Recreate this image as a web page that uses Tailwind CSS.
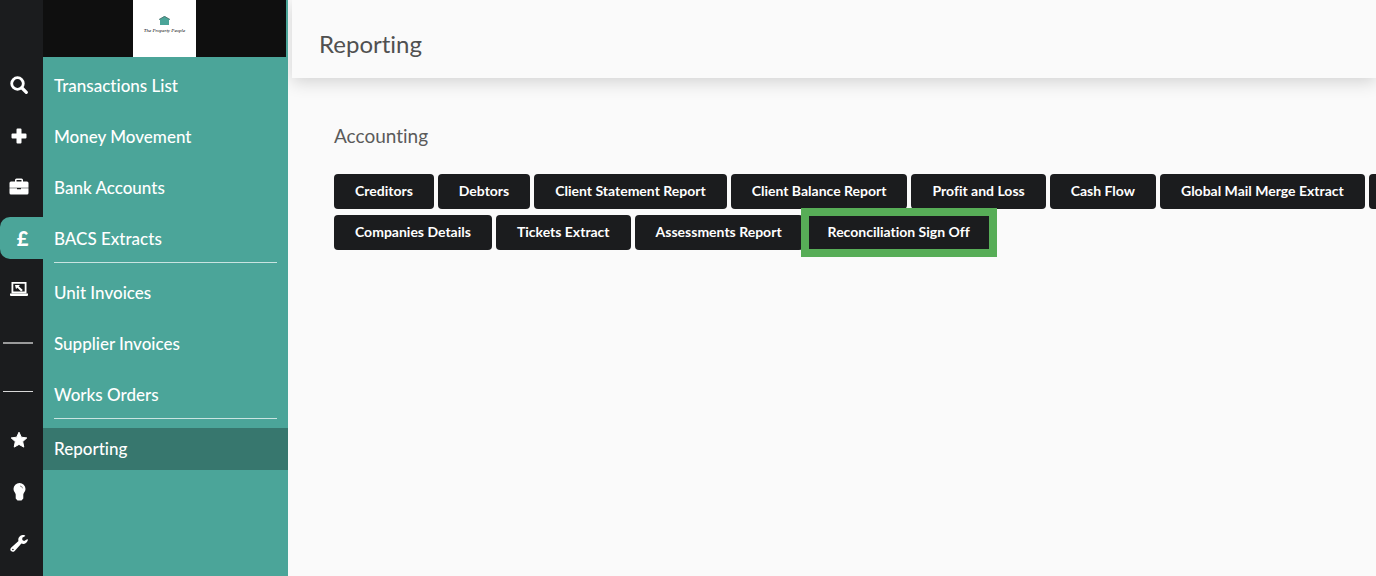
<!DOCTYPE html>
<html lang="en">
<head>
  <meta charset="UTF-8" />
  <meta name="viewport" content="width=device-width, initial-scale=1.0"/>
  <title>Reporting</title>
  <script src="https://cdn.jsdelivr.net/npm/@tailwindcss/browser@4"></script>
</head>
<body class="bg-[#fafafa] min-h-screen flex overflow-x-hidden font-['Lato',sans-serif] [font-variant-ligatures:none]">

  <!-- Icon rail -->
  <nav aria-label="Main" class="w-[43px] shrink-0 bg-[#1b1c1e] pt-16 text-white">
    <div class="flex flex-col gap-[9px]">
      <a href="#" aria-label="Search" class="h-[42px] pr-[5px] flex items-center justify-center">
        <svg class="size-[18px]" viewBox="0 0 18 18" fill="none" stroke="currentColor"><circle cx="7.5" cy="7.5" r="5.8" stroke-width="2.8"/><path d="M12 12l4.3 4.3" stroke-width="3.2" stroke-linecap="round"/></svg>
      </a>
      <a href="#" aria-label="Add" class="h-[42px] pr-[5px] flex items-center justify-center">
        <svg class="size-[16px]" viewBox="0 0 16 16" fill="currentColor"><path d="M6.500 0.500h3a1 1 0 0 1 1 1v4h4a1 1 0 0 1 1 1v3a1 1 0 0 1-1 1h-4v4a1 1 0 0 1-1 1h-3a1 1 0 0 1-1-1v-4h-4a1 1 0 0 1-1-1v-3a1 1 0 0 1 1-1h4v-4a1 1 0 0 1 1-1z"/></svg>
      </a>
      <a href="#" aria-label="Portfolio" class="h-[42px] pr-[5px] flex items-center justify-center">
        <svg class="size-[20px]" viewBox="0 0 20 20" fill="currentColor"><path fill-rule="evenodd" d="M6 4.500V3a1.500 1.500 0 0 1 1.500-1.500h5A1.500 1.500 0 0 1 14 3v1.500h4A1.500 1.500 0 0 1 19.500 6v4.800h-19V6A1.500 1.500 0 0 1 2 4.500zM7.500 3v1.500h5V3z"/><path d="M.5 11.300H8v1h4v-1h7.500V16a1.500 1.500 0 0 1-1.500 1.500H2A1.500 1.500 0 0 1 .5 16z"/></svg>
      </a>
      <a href="#" aria-label="Accounts" aria-current="page" class="h-[42px] pl-[2px] flex items-center justify-center rounded-l-[10px] bg-[#4ba599] text-[20px] leading-[20px] font-black">£</a>
      <a href="#" aria-label="Portal" class="h-[42px] pr-[5px] flex items-center justify-center">
        <svg class="size-[18px]" viewBox="0 0 18 18" fill="currentColor"><path fill-rule="evenodd" d="M1.500 2h15v11.500h-15zM3.300 3.800v7.700h11.400V3.800z"/><path d="M0 13.500h18V15a1 1 0 0 1-1 1H1a1 1 0 0 1-1-1z"/><path d="M5 5h5L8.700 6.300l4.100 3.600-1.600 1.600-3.800-3.800L6 9z"/></svg>
      </a>
    </div>
    <hr class="mt-8 ml-[3px] w-[30px] h-[2px] border-0 bg-[#9a9a9b]" />
    <hr class="mt-[47px] ml-[3px] w-[30px] h-px border-0 bg-[#d8d8d8]" />
    <div class="mt-[27px] flex flex-col gap-[10px]">
      <a href="#" aria-label="Favourites" class="h-[42px] pr-[5px] flex items-center justify-center">
        <svg class="size-[18px]" viewBox="0 0 18 18" fill="currentColor" stroke="currentColor" stroke-linejoin="round"><path d="M9 1.200l2.300 5 5.500.7-4.100 3.700 1.100 5.500L9 13.400l-4.800 2.700 1.100-5.500L1.200 6.900l5.500-.7z"/></svg>
      </a>
      <a href="#" aria-label="Ideas" class="h-[42px] pr-[5px] flex items-center justify-center">
        <svg class="w-[13px] h-[18px]" viewBox="0 0 13 18"><path fill="currentColor" d="M6.500 0A6 6 0 0 1 12.500 6c0 2.500-2 3.600-2.200 5.500v4L8.500 17.500h-4l-1.800-2v-4C2.500 9.600.5 8.500.5 6a6 6 0 0 1 6-6z"/><path d="M7 3a2.500 2.500 0 0 1 2.500 2.300" fill="none" stroke="#8a8a8a"/></svg>
      </a>
      <a href="#" aria-label="Settings" class="h-[42px] pr-[5px] flex items-center justify-center">
        <svg class="size-[18px]" viewBox="0 0 18 18"><path fill="currentColor" fill-rule="evenodd" d="M15.300.9l-3 1.800v2.400l1.800 1 3-1.800c.9-.4.9.5.6 1.300-1 3-3.800 4-6.300 3l-6.700 7.300c-1.300 1.300-2.600 1.200-3.600.2s-1.200-2.300.2-3.600l7.200-6.500C7.500 3.500 9.500.6 12.500.1c1-.2 2.700.1 2.800.8zM2.900 13.700a.8.800 0 1 0 0 1.600.8.800 0 0 0 0-1.600z"/></svg>
      </a>
    </div>
  </nav>

  <!-- Section menu -->
  <aside class="w-[245px] shrink-0 bg-[#4ba599]">
    <div class="mr-[2px] h-[57px] bg-[#0f0f0f] flex justify-center">
      <div class="w-[63px] bg-white flex flex-col items-center pt-4">
        <svg class="w-[11px] h-[9px]" viewBox="0 0 11 9"><path d="M5.500 0L11 3.500 10 4v5H1V4L0 3.500z" fill="#4ba599"/><path d="M0 3.500L5.500.4 11 3.500" fill="none" stroke="#4a6d68" stroke-width=".8"/></svg>
        <span class="mt-px text-[5px] leading-[10px] italic font-['Liberation_Serif',serif] text-black whitespace-nowrap">The Property People</span>
      </div>
    </div>
    <nav aria-label="Accounts" class="pt-2 text-[17px] leading-[42px] text-white font-medium">
      <div class="flex flex-col gap-[9px]">
        <a href="#" class="h-[42px] pl-[11px]">Transactions List</a>
        <a href="#" class="h-[42px] pl-[11px]">Money Movement</a>
        <a href="#" class="h-[42px] pl-[11px]">Bank Accounts</a>
        <a href="#" class="h-[42px] pl-[11px]">BACS Extracts</a>
      </div>
      <hr class="mt-[2px] mb-[9px] mx-[11px] border-0 h-px bg-white/70" />
      <div class="flex flex-col gap-[9px]">
        <a href="#" class="h-[42px] pl-[11px]">Unit Invoices</a>
        <a href="#" class="h-[42px] pl-[11px]">Supplier Invoices</a>
        <a href="#" class="h-[42px] pl-[11px]">Works Orders</a>
      </div>
      <hr class="mt-[2px] mb-[9px] mx-[11px] border-0 h-px bg-white/70" />
      <a href="#" aria-current="page" class="block h-[42px] pl-[11px] bg-[#37776e]">Reporting</a>
    </nav>
  </aside>

  <!-- Page content -->
  <main class="flex-1 min-w-0 overflow-hidden">
    <header class="ml-1 h-[78px] pl-[27px] pt-[10px] flex items-center bg-[#fafafa] shadow-[0_4px_16px_rgba(0,0,0,0.16)]">
      <h1 class="text-[24px] leading-[30px] text-[#505050]">Reporting</h1>
    </header>

    <section class="pl-[46px] pt-[46px]">
      <h2 class="text-[19px] leading-6 text-[#5a5a5a]">Accounting</h2>
      <div class="mt-[26px] flex flex-col gap-[6px] text-[14px] leading-[34px] font-bold text-white whitespace-nowrap">
        <div class="flex gap-1">
          <button class="shrink-0 px-[21px] pb-px rounded-[4px] bg-[#1b1c1e]">Creditors</button>
          <button class="shrink-0 px-[21px] pb-px rounded-[4px] bg-[#1b1c1e]">Debtors</button>
          <button class="shrink-0 px-[21px] pb-px rounded-[4px] bg-[#1b1c1e]">Client Statement Report</button>
          <button class="shrink-0 px-[21px] pb-px rounded-[4px] bg-[#1b1c1e]">Client Balance Report</button>
          <button class="shrink-0 px-[21px] pb-px rounded-[4px] bg-[#1b1c1e]">Profit and Loss</button>
          <button class="shrink-0 px-[21px] pb-px rounded-[4px] bg-[#1b1c1e]">Cash Flow</button>
          <button class="shrink-0 px-[21px] pb-px rounded-[4px] bg-[#1b1c1e]">Global Mail Merge Extract</button>
          <button aria-label="More reports" class="shrink-0 px-[21px] pb-px rounded-[4px] bg-[#1b1c1e]"></button>
        </div>
        <div class="flex gap-1">
          <button class="shrink-0 px-[21px] pb-px rounded-[4px] bg-[#1b1c1e]">Companies Details</button>
          <button class="shrink-0 px-[21px] pb-px rounded-[4px] bg-[#1b1c1e]">Tickets Extract</button>
          <button class="shrink-0 px-[21px] pb-px rounded-[4px] bg-[#1b1c1e]">Assessments Report</button>
          <div class="relative">
            <button class="px-[21px] pb-px rounded-[4px] bg-[#1b1c1e]">Reconciliation Sign Off</button>
            <span class="absolute -inset-x-[6px] -inset-y-[7px] border-8 border-[#57ad57] pointer-events-none"></span>
          </div>
        </div>
      </div>
    </section>
  </main>

</body>
</html>
